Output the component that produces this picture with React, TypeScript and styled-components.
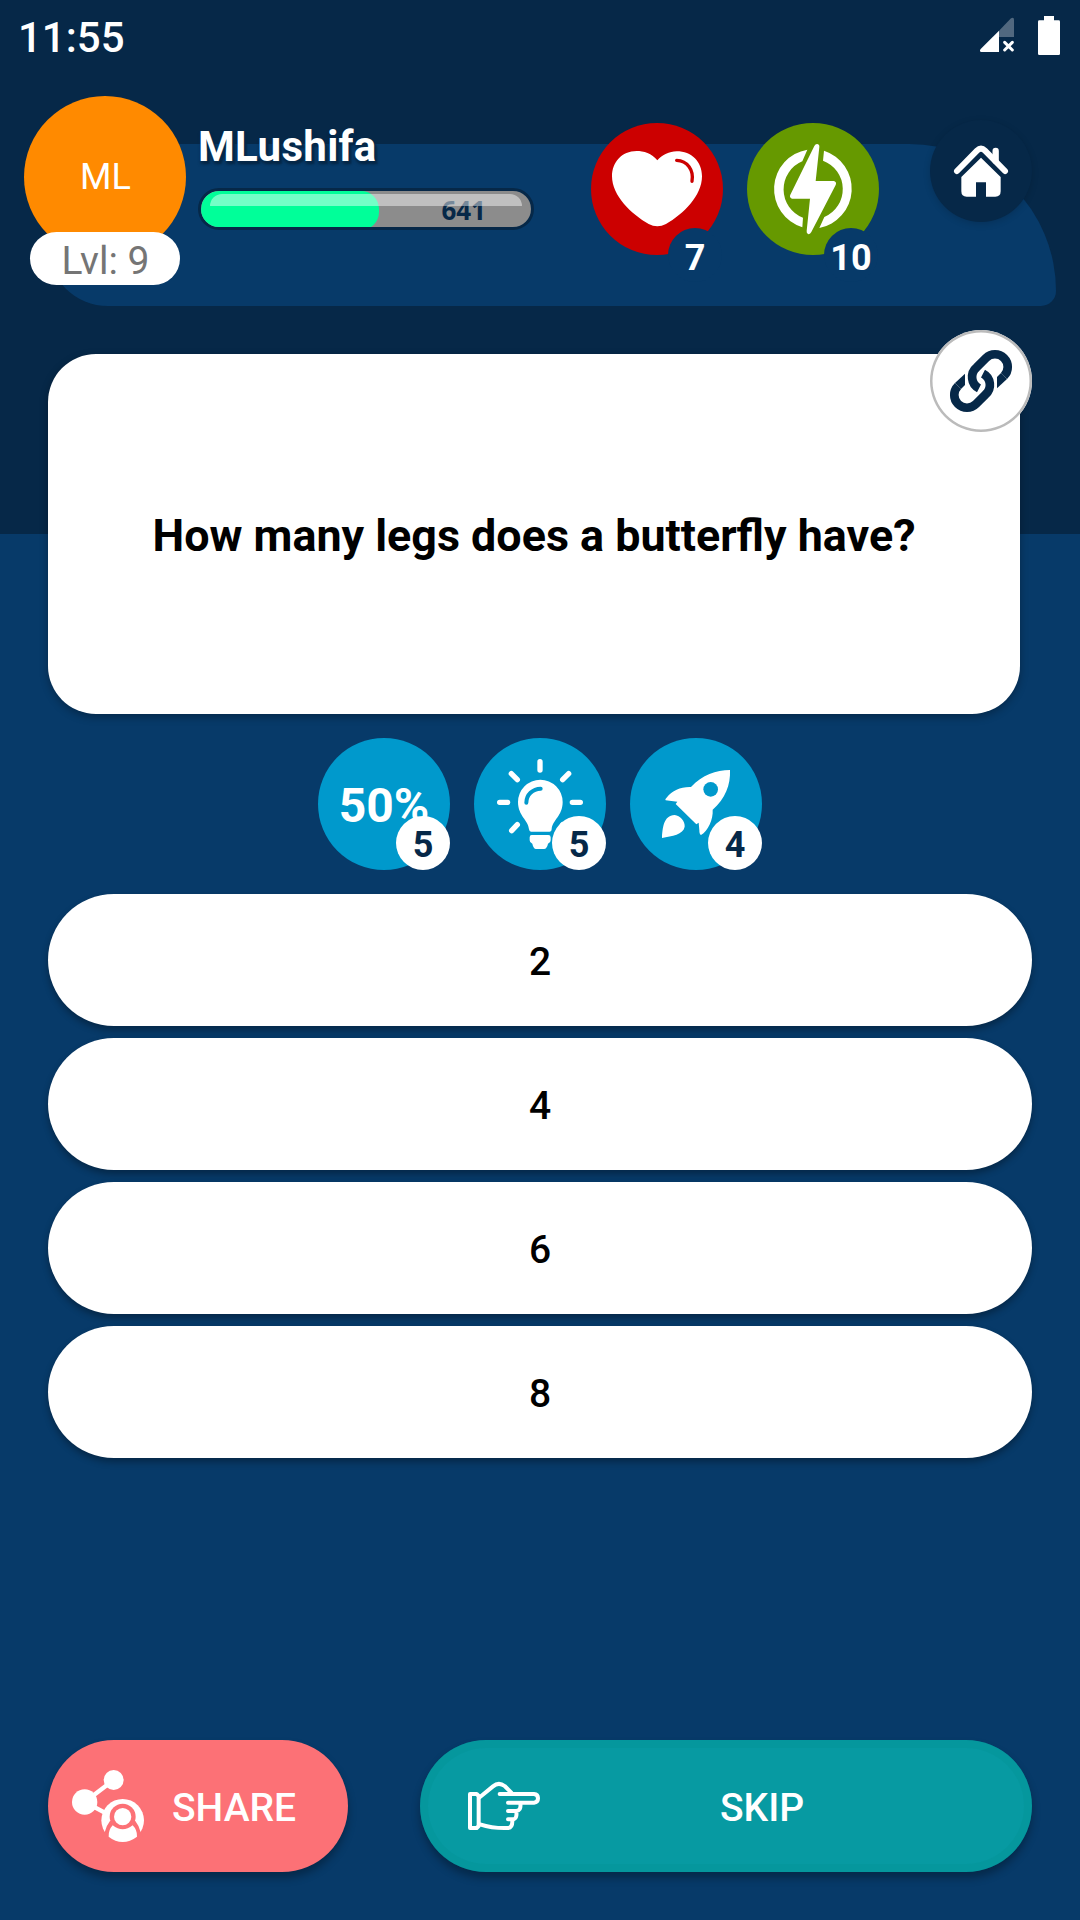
import React from "react";
import styled, { createGlobalStyle } from "styled-components";

const color = {
  dark: "#062848",
  blue: "#073a69",
  sky: "#0099cc",
  orange: "#ff8a00",
  red: "#cc0000",
  green: "#669900",
  coral: "#fc7176",
  teal: "#079aa2",
  mint: "#00ff99",
};

const GlobalStyle = createGlobalStyle`
  * { box-sizing: border-box; }
  body { margin: 0; background: ${color.blue}; }
  button { border: 0; padding: 0; font: inherit; color: inherit; background: none; }
  svg { display: block; }
`;

const Screen = styled.main`
  width: 1080px;
  height: 1920px;
  overflow: hidden;
  display: flex;
  flex-direction: column;
  font-family: Roboto, "Noto Sans", sans-serif;
  color: #fff;
  background: linear-gradient(${color.dark} 534px, ${color.blue} 534px);
`;

const StatusBar = styled.div`
  height: 72px;
  padding: 13px 20px 0 18px;
  display: flex;
  justify-content: space-between;
  align-items: flex-start;
`;

const Clock = styled.span`
  font-size: 42px;
  font-weight: 500;
  line-height: 50px;
`;

const StatusIcons = styled.div`
  display: flex;
  gap: 24px;
  padding-top: 3px;
`;

const Header = styled.header`
  display: grid;
  height: 234px;
`;

const HeaderPanel = styled.div`
  grid-area: 1 / 1;
  align-self: end;
  height: 162px;
  margin: 0 24px 0 48px;
  border-radius: 0 147px 15px 60px;
  background: ${color.blue};
`;

const HeaderContent = styled.div`
  grid-area: 1 / 1;
  display: flex;
  align-items: flex-start;
  padding: 24px 48px 0 24px;
`;

const Profile = styled.div`
  width: 162px;
  display: flex;
  flex-direction: column;
  align-items: center;
`;

const Avatar = styled.div`
  width: 162px;
  height: 162px;
  border-radius: 50%;
  background: ${color.orange};
  display: grid;
  place-items: center;
  padding-left: 1px;
  font-size: 36px;
`;

const Level = styled.div`
  width: 150px;
  height: 53px;
  margin-top: -26px;
  padding-left: 1px;
  border-radius: 27px;
  background: #fff;
  color: #757575;
  font-size: 39px;
  line-height: 58px;
  text-align: center;
`;

const UserInfo = styled.div`
  width: 336px;
  margin-left: 12px;
  padding-top: 25px;
`;

const UserName = styled.div`
  height: 67px;
  font-size: 42px;
  font-weight: 700;
  letter-spacing: 0.3px;
  line-height: 51px;
  text-shadow: 0 3px 3px ${color.dark}, 3px 3px 2px ${color.dark};
`;

const Progress = styled.div`
  height: 42px;
  border: 3px solid ${color.dark};
  border-radius: 21px;
  background: #8c8c8c;
  overflow: hidden;
  display: grid;
`;

const ProgressFill = styled.div<{ $percent: number }>`
  grid-area: 1 / 1;
  width: ${(p) => p.$percent}%;
  border-radius: 18px;
  background: ${color.mint};
`;

const ProgressValue = styled.div`
  grid-area: 1 / 1;
  padding-right: 45px;
  text-align: right;
  font: 700 26px/39px "Noto Sans", sans-serif;
  color: ${color.dark};
`;

const ProgressGloss = styled.div`
  grid-area: 1 / 1;
  height: 12px;
  margin: 3px 9px 0;
  border-radius: 12px 12px 0 0;
  background: rgba(255, 255, 255, 0.45);
`;

const Counters = styled.div`
  display: flex;
  gap: 24px;
  margin: 27px 0 0 57px;
`;

const Disc = styled.div<{ $fill: string }>`
  position: relative;
  width: 132px;
  height: 132px;
  border-radius: 50%;
  background: ${(p) => p.$fill};
  display: grid;
  place-items: center;
`;

const CountBadge = styled.span<{ $light?: boolean }>`
  position: absolute;
  right: ${(p) => (p.$light ? 0 : 1)}px;
  bottom: ${(p) => (p.$light ? 0 : -27)}px;
  width: 54px;
  height: 54px;
  border-radius: 50%;
  background: ${(p) => (p.$light ? "#fff" : color.blue)};
  color: ${(p) => (p.$light ? color.dark : "#fff")};
  display: flex;
  justify-content: center;
  font-size: 36px;
  font-weight: 700;
  line-height: ${(p) => (p.$light ? 59 : 60)}px;
`;

const HomeButton = styled.button`
  width: 102px;
  height: 102px;
  margin: 24px 0 0 auto;
  border-radius: 50%;
  background: ${color.dark};
  box-shadow: 0 2px 7px rgba(0, 0, 0, 0.15);
`;

const QuestionCard = styled.section`
  position: relative;
  height: 360px;
  margin: 48px 60px 0 48px;
  border-radius: 48px;
  background: #fff;
  box-shadow: 0 3px 8px rgba(0, 0, 0, 0.3);
  display: grid;
  place-items: center;
  color: #000;
`;

const Question = styled.h1`
  margin: 3px 0 0;
  font-size: 44.85px;
  font-weight: 700;
  line-height: 54px;
`;

const LinkButton = styled.button`
  position: absolute;
  top: -24px;
  right: -12px;
  width: 102px;
  height: 102px;
  border-radius: 50%;
  background: #fff;
  box-shadow: inset 0 0 0 2.5px #bbb;
`;

const PowerUps = styled.div`
  display: flex;
  justify-content: center;
  gap: 24px;
  margin-top: 24px;
`;

const HalfLabel = styled.span`
  padding-top: 4px;
  font-size: 48px;
  font-weight: 700;
  line-height: 56px;
`;

const Answers = styled.div`
  display: flex;
  flex-direction: column;
  gap: 12px;
  margin: 24px 48px 0;
`;

const Answer = styled.button`
  height: 132px;
  border-radius: 66px;
  background: #fff;
  color: #000;
  font-size: 39px;
  font-weight: 500;
  line-height: 46px;
  padding-top: 3px;
  box-shadow: 0 4px 7px rgba(0, 0, 0, 0.32);
`;

const Actions = styled.footer`
  display: flex;
  gap: 72px;
  margin: auto 48px 48px;
`;

const ActionButton = styled.button<{ $fill: string; $grow?: boolean }>`
  display: flex;
  align-items: center;
  height: 132px;
  width: ${(p) => (p.$grow ? "auto" : "300px")};
  flex: ${(p) => (p.$grow ? 1 : "none")};
  padding-left: ${(p) => (p.$grow ? 48 : 24)}px;
  border-radius: 66px;
  background: ${(p) => p.$fill};
  box-shadow: 0 6px 9px rgba(0, 0, 0, 0.3)
    ${(p) => (p.$grow ? ", inset 0 0 0 8px rgba(0, 140, 140, 0.2)" : "")};
`;

const ActionLabel = styled.span<{ $indent: number }>`
  padding-left: ${(p) => p.$indent}px;
  padding-top: 3px;
  font-size: 39px;
  font-weight: 500;
`;

const SignalIcon = () => (
  <svg width="34" height="36" viewBox="270 54 102 108">
    <path d="M327 117V98L363 61Q372 56 372 66V117Z" fill="#fff" opacity=".3" />
    <path d="M327 98V162H274Q267 160 272 153Z" fill="#fff" />
    <path d="M344 133L367 156M367 133L344 156" stroke="#fff" strokeWidth="9" strokeLinecap="round" />
  </svg>
);

const BatteryIcon = () => (
  <svg width="22" height="39" viewBox="444 48 66 117" fill="#fff">
    <path d="M462 48H492V61H506Q510 61 510 65V161Q510 165 506 165H448Q444 165 444 161V65Q444 61 448 61H462Z" />
  </svg>
);

const HeartIcon = () => (
  <svg width="132" height="132" viewBox="63 69 396 396">
    <path
      fill="#fff"
      d="M262 181C246 160 220 153 200 153C155 153 126 187 126 229C126 287 184 343 236 372Q262 386 288 372C340 343 396 287 396 229C396 185 365 154 320 154C298 155 277 164 262 181Z"
    />
    <path d="M320 181C352 182 372 210 366 244" fill="none" stroke={color.red} strokeWidth="10" strokeLinecap="round" />
  </svg>
);

const EnergyIcon = () => (
  <svg width="132" height="132" viewBox="531 69 396 396" fill="#fff">
    <path d="M712 149A120 120 0 0 0 697 382L699 353A91 91 0 0 1 697 184Z" />
    <path d="M762 152A120 120 0 0 1 748 384L763 351A91 91 0 0 0 759 182Z" />
    <path d="M741 132Q749 133 748 141L737 243H792Q801 246 797 255L724 396Q720 404 714 402Q709 399 710 393L720 296H666Q657 292 661 284L733 138Q736 132 741 132Z" />
  </svg>
);

const HomeIcon = () => (
  <svg width="102" height="102" viewBox="120 360 306 306">
    <g fill="none" stroke="#fff" strokeLinecap="round">
      <path d="M317 453V482" strokeWidth="19" />
      <path d="M201 513L261 452Q273 440 285 452L345 513" strokeWidth="18" />
    </g>
    <path fill="#fff" d="M273 473L332 531V574Q332 590 316 590H288V547H258V590H230Q214 590 214 574V531Z" />
  </svg>
);

const LinkIcon = () => (
  <svg width="102" height="102" viewBox="90 300 306 306">
    <g fill="none" stroke={color.dark} strokeWidth="26">
      <path d="M312 438A38 38 0 0 0 258 384L230 412A38 38 0 0 0 237 475" />
      <path d="M174 468A38 38 0 0 0 228 522L256 494A38 38 0 0 0 249 431" />
    </g>
    <g fill={color.dark}>
      <path d="M321 447L291 475V441L303 429Z" />
      <path d="M165 459L195 431V465L183 477Z" />
    </g>
  </svg>
);

const BulbIcon = () => (
  <svg width="132" height="132" viewBox="27 24 396 396">
    <path
      d="M225 95V120M139 131L157 149M311 131L293 149M104 217H128M322 217H346M157 284L140 302M293 284L310 302"
      stroke="#fff"
      strokeWidth="16"
      strokeLinecap="round"
    />
    <g fill="#fff">
      <path d="M198 305Q193 305 192 298C190 270 159 258 159 216A67 67 0 0 1 293 216C293 258 262 270 260 298Q260 305 254 305Z" />
      <path d="M200 315H250Q257 315 257 322V331Q257 339 249 341Q246 356 237 357H213Q205 356 202 341Q194 339 194 331V322Q194 315 200 315Z" />
    </g>
    <path d="M184 218C184 195 203 176 227 176" fill="none" stroke={color.sky} strokeWidth="12" strokeLinecap="round" />
  </svg>
);

const RocketIcon = () => (
  <svg width="132" height="132" viewBox="30 24 396 396">
    <path
      fill="#fff"
      d="M330 120C332 165 316 206 278 239C280 268 264 303 243 315Q238 313 238 300L236 278L229 283L167 222L172 215L137 211Q134 208 139 204C158 180 182 170 213 171C247 135 288 120 330 120Z"
    />
    <circle cx="272" cy="178" r="22" fill={color.sky} />
    <path fill="#fff" d="M126 324C128 296 130 256 164 255C180 256 196 274 194 290C190 314 156 318 126 324Z" />
  </svg>
);

const ShareIcon = () => (
  <svg width="72" height="72" viewBox="126 150 216 216">
    <path d="M164 246L251 180M164 246L240 286" stroke="#fff" strokeWidth="13" />
    <g fill="#fff">
      <circle cx="251" cy="180" r="30" />
      <circle cx="164" cy="246" r="38" />
      <circle cx="278" cy="301" r="64" />
    </g>
    <g fill={color.coral}>
      <circle cx="278" cy="290" r="39" />
      <path d="M240 303Q228 318 224 337L200 380H356L332 337Q328 318 316 303Z" />
    </g>
    <g fill="#fff">
      <circle cx="278" cy="290" r="26" />
      <path d="M248 316Q278 340 308 316Q322 330 321 350Q300 366 278 366Q256 366 236 350Q235 330 248 316Z" />
    </g>
  </svg>
);

const HandIcon = () => (
  <svg width="72" height="72" viewBox="204 150 216 216">
    <g fill="none" stroke="#fff" strokeWidth="12" strokeLinecap="round" strokeLinejoin="round">
      <path d="M210 222H230L236 228V318L230 324H210Z" />
      <path d="M240 231L279 199Q296 185 314 198L334 218" />
      <path d="M299 222H402Q414 223 414 235Q414 247 402 248H324" />
      <path d="M361 250Q364 272 348 273H324M349 275Q352 297 338 298H324" />
      <path d="M337 300Q338 323 325 324Q280 326 240 313" />
    </g>
  </svg>
);

const answers = ["2", "4", "6", "8"];

export default function App() {
  return (
    <>
      <GlobalStyle />
      <Screen>
        <StatusBar>
          <Clock>11:55</Clock>
          <StatusIcons>
            <SignalIcon />
            <BatteryIcon />
          </StatusIcons>
        </StatusBar>

        <Header>
          <HeaderPanel />
          <HeaderContent>
            <Profile>
              <Avatar>ML</Avatar>
              <Level>Lvl: 9</Level>
            </Profile>
            <UserInfo>
              <UserName>MLushifa</UserName>
              <Progress>
                <ProgressFill $percent={54} />
                <ProgressValue>641</ProgressValue>
                <ProgressGloss />
              </Progress>
            </UserInfo>
            <Counters>
              <Disc $fill={color.red}>
                <HeartIcon />
                <CountBadge>7</CountBadge>
              </Disc>
              <Disc $fill={color.green}>
                <EnergyIcon />
                <CountBadge>10</CountBadge>
              </Disc>
            </Counters>
            <HomeButton aria-label="Home">
              <HomeIcon />
            </HomeButton>
          </HeaderContent>
        </Header>

        <QuestionCard>
          <Question>How many legs does a butterfly have?</Question>
          <LinkButton aria-label="Link">
            <LinkIcon />
          </LinkButton>
        </QuestionCard>

        <PowerUps>
          <Disc $fill={color.sky}>
            <HalfLabel>50%</HalfLabel>
            <CountBadge $light>5</CountBadge>
          </Disc>
          <Disc $fill={color.sky}>
            <BulbIcon />
            <CountBadge $light>5</CountBadge>
          </Disc>
          <Disc $fill={color.sky}>
            <RocketIcon />
            <CountBadge $light>4</CountBadge>
          </Disc>
        </PowerUps>

        <Answers>
          {answers.map((a) => (
            <Answer key={a}>{a}</Answer>
          ))}
        </Answers>

        <Actions>
          <ActionButton $fill={color.coral}>
            <ShareIcon />
            <ActionLabel $indent={28}>SHARE</ActionLabel>
          </ActionButton>
          <ActionButton $fill={color.teal} $grow>
            <HandIcon />
            <ActionLabel $indent={180}>SKIP</ActionLabel>
          </ActionButton>
        </Actions>
      </Screen>
    </>
  );
}
